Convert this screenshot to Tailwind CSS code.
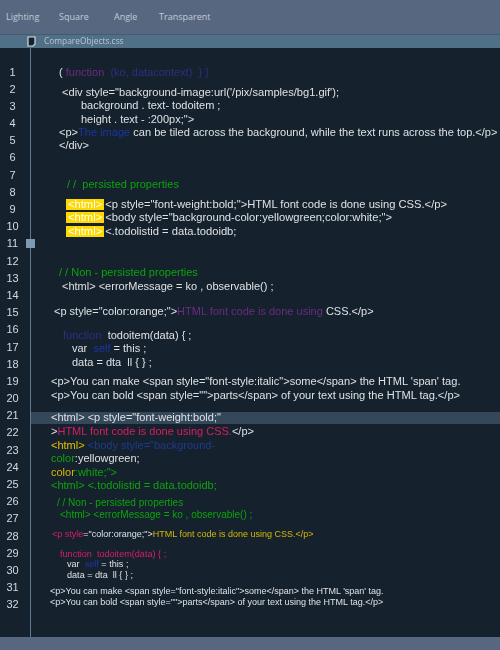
<!DOCTYPE html>
<html>
<head>
<meta charset="utf-8">
<script src="https://cdn.jsdelivr.net/npm/@tailwindcss/browser@4"></script>
</head>
<body class="m-0 bg-[#16212e]">
<div class="w-[500px] h-[650px] overflow-hidden flex flex-col blur-[0.3px] font-['Liberation_Sans',Arial,sans-serif] text-[#dde1e4]">
  <div class="h-[34px] shrink-0 bg-[#56677f] flex items-center pl-[6px] text-[#c3ccd6] text-[9px] font-['Open_Sans',sans-serif]">
    <span class="w-[53px]">Lighting</span>
    <span class="w-[55px]">Square</span>
    <span class="w-[45px]">Angle</span>
    <span>Transparent</span>
  </div>
  <div class="h-[14px] shrink-0 bg-[#4f7087] border-t border-[#465a72] flex items-center pl-[27px] gap-[8px] text-[#b9c6d2] text-[8.4px] font-['Open_Sans',sans-serif]">
    <svg width="9" height="11" viewBox="0 0 9 11"><path d="M1 1h7v7l-2 2H1z" fill="#16212e" stroke="#d5dde3" stroke-width="1.2"/></svg>
    <span>CompareObjects.css</span>
  </div>
  <div class="relative flex-1 flex">
    <div class="w-[31px] shrink-0 border-r border-[#5d7a90] pt-[15.5px] text-[11px] leading-[17.19px] text-center pr-[5px] text-[#d5dade]">
      <div>1</div><div>2</div><div>3</div><div>4</div><div>5</div><div>6</div><div>7</div><div>8</div><div>9</div><div>10</div><div>11</div><div>12</div><div>13</div><div>14</div><div>15</div><div>16</div><div>17</div><div>18</div><div>19</div><div>20</div><div>21</div><div>22</div><div>23</div><div>24</div><div>25</div><div>26</div><div>27</div><div>28</div><div>29</div><div>30</div><div>31</div><div>32</div>
    </div>
    <div class="absolute left-[26px] top-[191px] w-[9px] h-[9px] bg-[#7a9bb3]"></div>
    <div class="flex-1 pt-[17px] text-[11px] leading-[14px] [&>div]:whitespace-pre">
      <div class="h-[20px] pl-[28px]">( <span class="text-[#6b2a83]">function</span>  <span class="text-[#2f2f80]">(ko, datacontext)  } }</span></div>
      <div class="h-[13px] pl-[31px] text-[11.1px]">&lt;div style="background-image:url('/pix/samples/bg1.gif');</div>
      <div class="h-[14px] pl-[50px]">background . text- todoitem ;</div>
      <div class="h-[13px] pl-[50px]">height . text - :200px;"&gt;</div>
      <div class="h-[13px] pl-[28px] text-[11.05px]">&lt;p&gt;<span class="text-[#1a35a5]">The image</span> can be tiled across the background, while the text runs across the top.&lt;/p&gt;</div>
      <div class="h-[39px] pl-[28px]">&lt;/div&gt;</div>
      <div class="h-[20px] pl-[36px] text-[#0ca30c]">/ /  persisted properties</div>
      <div class="h-[13px] pl-[35px] text-[11.2px]"><span class="inline-block h-[11px] leading-[11px] bg-[#ffd800] text-white px-[2px] mr-[1px]">&lt;html&gt;</span>&lt;p style="font-weight:bold;"&gt;HTML font code is done using CSS.&lt;/p&gt;</div>
      <div class="h-[14px] pl-[35px] text-[11.2px]"><span class="inline-block h-[11px] leading-[11px] bg-[#ffd800] text-white px-[2px] mr-[1px]">&lt;html&gt;</span>&lt;body style="background-color:yellowgreen;color:white;"&gt;</div>
      <div class="h-[41px] pl-[35px] text-[11.2px]"><span class="inline-block h-[11px] leading-[11px] bg-[#ffd800] text-white px-[2px] mr-[1px]">&lt;html&gt;</span>&lt;.todolistid = data.todoidb;</div>
      <div class="h-[14px] pl-[28px] text-[#0ca30c]">/ / Non - persisted properties</div>
      <div class="h-[25px] pl-[31px]">&lt;html&gt; &lt;errorMessage = ko , observable() ;</div>
      <div class="h-[24px] pl-[23px]">&lt;p style="color:orange;"&gt;<span class="text-[#6b2a83]">HTML font code is done using</span> CSS.&lt;/p&gt;</div>
      <div class="h-[13px] pl-[32px]"><span class="text-[#2f2f80]">function</span>  todoitem(data) { ;</div>
      <div class="h-[14px] pl-[41px]">var  <span class="text-[#1a35a5]">self</span> = this ;</div>
      <div class="h-[19px] pl-[41px]">data = dta  ll { } ;</div>
      <div class="h-[14px] pl-[20px] text-[11.05px]">&lt;p&gt;You can make &lt;span style="font-style:italic"&gt;some&lt;/span&gt; the HTML 'span' tag.</div>
      <div class="h-[24px] pl-[20px] text-[11.05px]">&lt;p&gt;You can bold &lt;span style=""&gt;parts&lt;/span&gt; of your text using the HTML tag.&lt;/p&gt;</div>
      <div class="h-[12px] pl-[20px] bg-[#35485a] leading-[11px]">&lt;html&gt; &lt;p style="font-weight:bold;"</div>
      <div class="h-[14px] pl-[20px]">&gt;<span class="text-[#d81e63]">HTML font code is done using CSS.</span>&lt;/p&gt;</div>
      <div class="h-[13px] pl-[20px]"><span class="text-[#e0c000]">&lt;html&gt;</span> <span class="text-[#1f3a8f]">&lt;body style="background-</span></div>
      <div class="h-[14px] pl-[20px]"><span class="text-[#0ca30c]">color</span>:yellowgreen;</div>
      <div class="h-[13px] pl-[20px] text-[#0ca30c]"><span class="text-[#d4b800]">color</span>:white;"&gt;</div>
      <div class="h-[18px] pl-[20px] text-[#0ca30c]">&lt;html&gt; &lt;.todolistid = data.todoidb;</div>
      <div class="h-[12px] pl-[26px] text-[#0ca30c] text-[10px]">/ / Non - persisted properties</div>
      <div class="h-[19px] pl-[29px] text-[#0ca30c] text-[10px]">&lt;html&gt; &lt;errorMessage = ko , observable() ;</div>
      <div class="h-[20px] pl-[21px] text-[9px] text-[#d4b800]"><span class="text-[#d81e63]">&lt;p style</span><span class="text-[#dde1e4]">="color:orange;"&gt;</span>HTML font code is done using CSS.&lt;/p&gt;</div>
      <div class="h-[10px] pl-[29px] text-[9.1px] text-[#d81e63]">function  todoitem(data) { ;</div>
      <div class="h-[11px] pl-[36px] text-[9.1px]">var  <span class="text-[#1a35a5]">self</span> = this ;</div>
      <div class="h-[16px] pl-[36px] text-[9.1px]">data = dta  ll { } ;</div>
      <div class="h-[11px] pl-[19px] text-[9px]">&lt;p&gt;You can make &lt;span style="font-style:italic"&gt;some&lt;/span&gt; the HTML 'span' tag.</div>
      <div class="h-[11px] pl-[19px] text-[9px]">&lt;p&gt;You can bold &lt;span style=""&gt;parts&lt;/span&gt; of your text using the HTML tag.&lt;/p&gt;</div>
    </div>
  </div>
  <div class="h-[13px] shrink-0 bg-[#56677f]"></div>
</div>
</body>
</html>
